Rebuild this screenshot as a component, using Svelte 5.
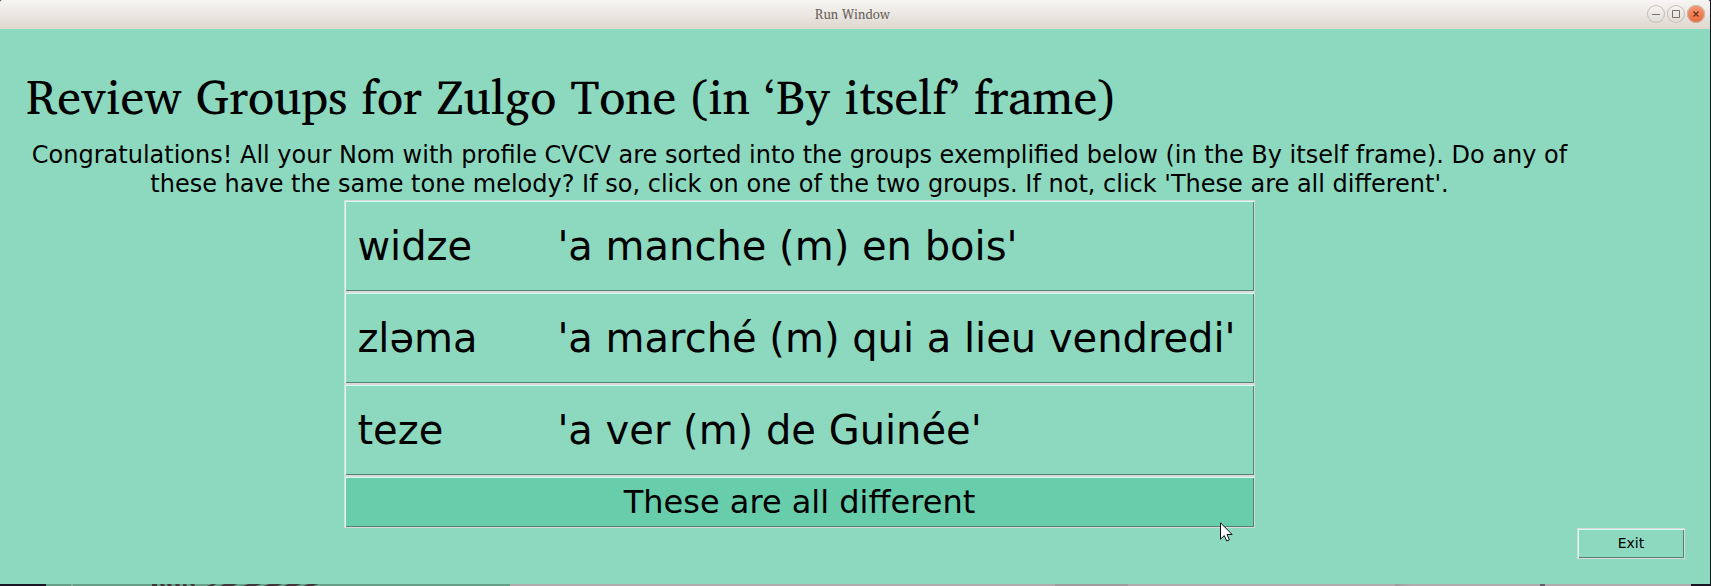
<script>
  const groups = [
    { form: 'widze', gloss: "'a manche (m) en bois'" },
    { form: 'zləma', gloss: "'a marché (m) qui a lieu vendredi'" },
    { form: 'teze', gloss: "'a ver (m) de Guinée'" }
  ];
</script>

<div class="page">
  <header class="titlebar">
    <span class="title">Run Window</span>
    <div class="controls">
      <button aria-label="Minimize">
        <svg viewBox="0 0 18 18"><path d="M5 9.5h8" /></svg>
      </button>
      <button aria-label="Maximize">
        <svg viewBox="0 0 18 18"><path d="M5.5 5.5h7v7h-7z" /></svg>
      </button>
      <button class="close" aria-label="Close">
        <svg viewBox="0 0 18 18"><path d="M6.5 6.5l5 5M11.5 6.5l-5 5" /></svg>
      </button>
    </div>
  </header>

  <main>
    <h1>Review Groups for Zulgo Tone (in ‘By itself’ frame)</h1>
    <section>
      <p>
        Congratulations! All your Nom with profile CVCV are sorted into the groups exemplified
        below (in the By itself frame). Do any of these have the same tone melody? If so, click on
        one of the two groups. If not, click 'These are all different'.
      </p>
      <div class="groups">
        {#each groups as group}
          <button class="bevel group">
            <span class="form">{group.form}</span>
            <span>{group.gloss}</span>
          </button>
        {/each}
        <button class="bevel different">These are all different</button>
        <svg class="pointer" viewBox="0 0 13 20">
          <path d="M.5.8v16.4l3.8-3.6 2.5 5.4 2.6-1.2-2.4-5.3h5.1z" />
        </svg>
      </div>
    </section>
    <button class="bevel exit">Exit</button>
  </main>

  <div class="backdrop">
    <svg viewBox="0 0 180 2">
      <path
        d="M0 0h5v2h-5zM8 0h4l1 2h-4zM15 0h4l1 2h-4zM23 0h4l1 2h-4zM31 0h3l1 2h-4zM38 0h4l1 2h-3zM60 0h4l-3 2h-6zM72 0h13l-4 2h-13zM96 0h13l-5 2h-13zM117 0h13l-5 2h-13zM136 0h13l-5 2h-12zM156 0h10l-5 2h-10z"
      />
    </svg>
  </div>
</div>

<style>
  :global(body) {
    margin: 0;
    background: #15151b;
  }

  .page {
    min-height: 100vh;
    display: flex;
    flex-direction: column;
    font-family: 'DejaVu Sans', sans-serif;
    color: #000;
  }

  button {
    font: inherit;
    color: inherit;
    margin: 0;
  }

  .titlebar {
    display: grid;
    grid-template-columns: 1fr auto 1fr;
    align-items: center;
    height: 29px;
    box-sizing: border-box;
    padding: 0 5px 1px 0;
    margin-right: 1px;
    background: linear-gradient(#f7f6f4, #ded7cf);
    border-radius: 2px 2px 0 0;
  }

  .title {
    grid-column: 2;
    font-family: 'Charis SIL', 'Liberation Serif', serif;
    font-size: 13px;
    line-height: 20px;
    color: #6b625c;
  }

  .controls {
    display: flex;
    justify-content: flex-end;
    gap: 2px;
  }

  .controls button {
    width: 18px;
    height: 18px;
    padding: 0;
    border: 0;
    border-radius: 50%;
    background: linear-gradient(#f7f5f3, #e0dbd5);
    box-shadow: inset 0 0 0 1px #c5beb6;
  }

  .controls .close {
    background: linear-gradient(#f99a76, #e9683c);
  }

  .controls svg {
    display: block;
    fill: none;
    stroke: #7c7168;
  }

  .controls .close svg {
    stroke: #6b3422;
    stroke-width: 1.3;
  }

  main {
    flex: 1;
    display: grid;
    grid-template-columns: 1fr 108px;
    grid-template-rows: auto 1fr;
    column-gap: 4px;
    padding: 29px 25px 25px 26px;
    margin-right: 1px;
    background: #8dd9bf;
  }

  h1 {
    grid-column: 1 / -1;
    margin: 0 0 7px;
    font-family: 'Charis SIL', 'Liberation Serif', serif;
    font-size: 48px;
    font-weight: 400;
    line-height: 76px;
  }

  section {
    display: flex;
    flex-direction: column;
    align-items: center;
  }

  p {
    margin: 0;
    font-size: 24px;
    line-height: 29px;
    text-align: center;
  }

  .groups {
    position: relative;
    display: flex;
    flex-direction: column;
    margin-top: 1px;
  }

  .bevel {
    border: 1px solid #d9d9d9;
    border-radius: 0;
    background: #8dd9bf;
    box-shadow:
      inset 1px 1px #d3fff5,
      inset -1px -1px #55826f;
  }

  .group {
    display: flex;
    padding: 21px 18px 21px 12px;
    font-size: 40px;
    line-height: 48px;
    text-align: left;
  }

  .form {
    min-width: 200px;
  }

  .different {
    padding: 6px;
    font-size: 32px;
    line-height: 38px;
    background: #68cdab;
  }

  .exit {
    align-self: end;
    padding: 6px;
    font-size: 14px;
    line-height: 17px;
  }

  .pointer {
    position: absolute;
    right: 22px;
    bottom: -14px;
    width: 13px;
    height: 20px;
    fill: #fff;
    stroke: #111;
  }

  .backdrop {
    height: 2px;
    padding-left: 152px;
    background: linear-gradient(
      90deg,
      #1a1522 46px,
      #669e88 46px 71px,
      #8cae9f 71px 73px,
      #669e88 73px 510px,
      #b0acae 510px 1055px,
      #a09c9e 1055px 1128px,
      #b0acae 1128px 1395px,
      #9f9b9d 1395px,
      #b0acae 1410px 1540px,
      #625f6b 1540px 1545px,
      #b0acae 1545px 1691px,
      #1a1522 1691px
    );
  }

  .backdrop svg {
    display: block;
    width: 180px;
    height: 2px;
    fill: #42383c;
  }
</style>
